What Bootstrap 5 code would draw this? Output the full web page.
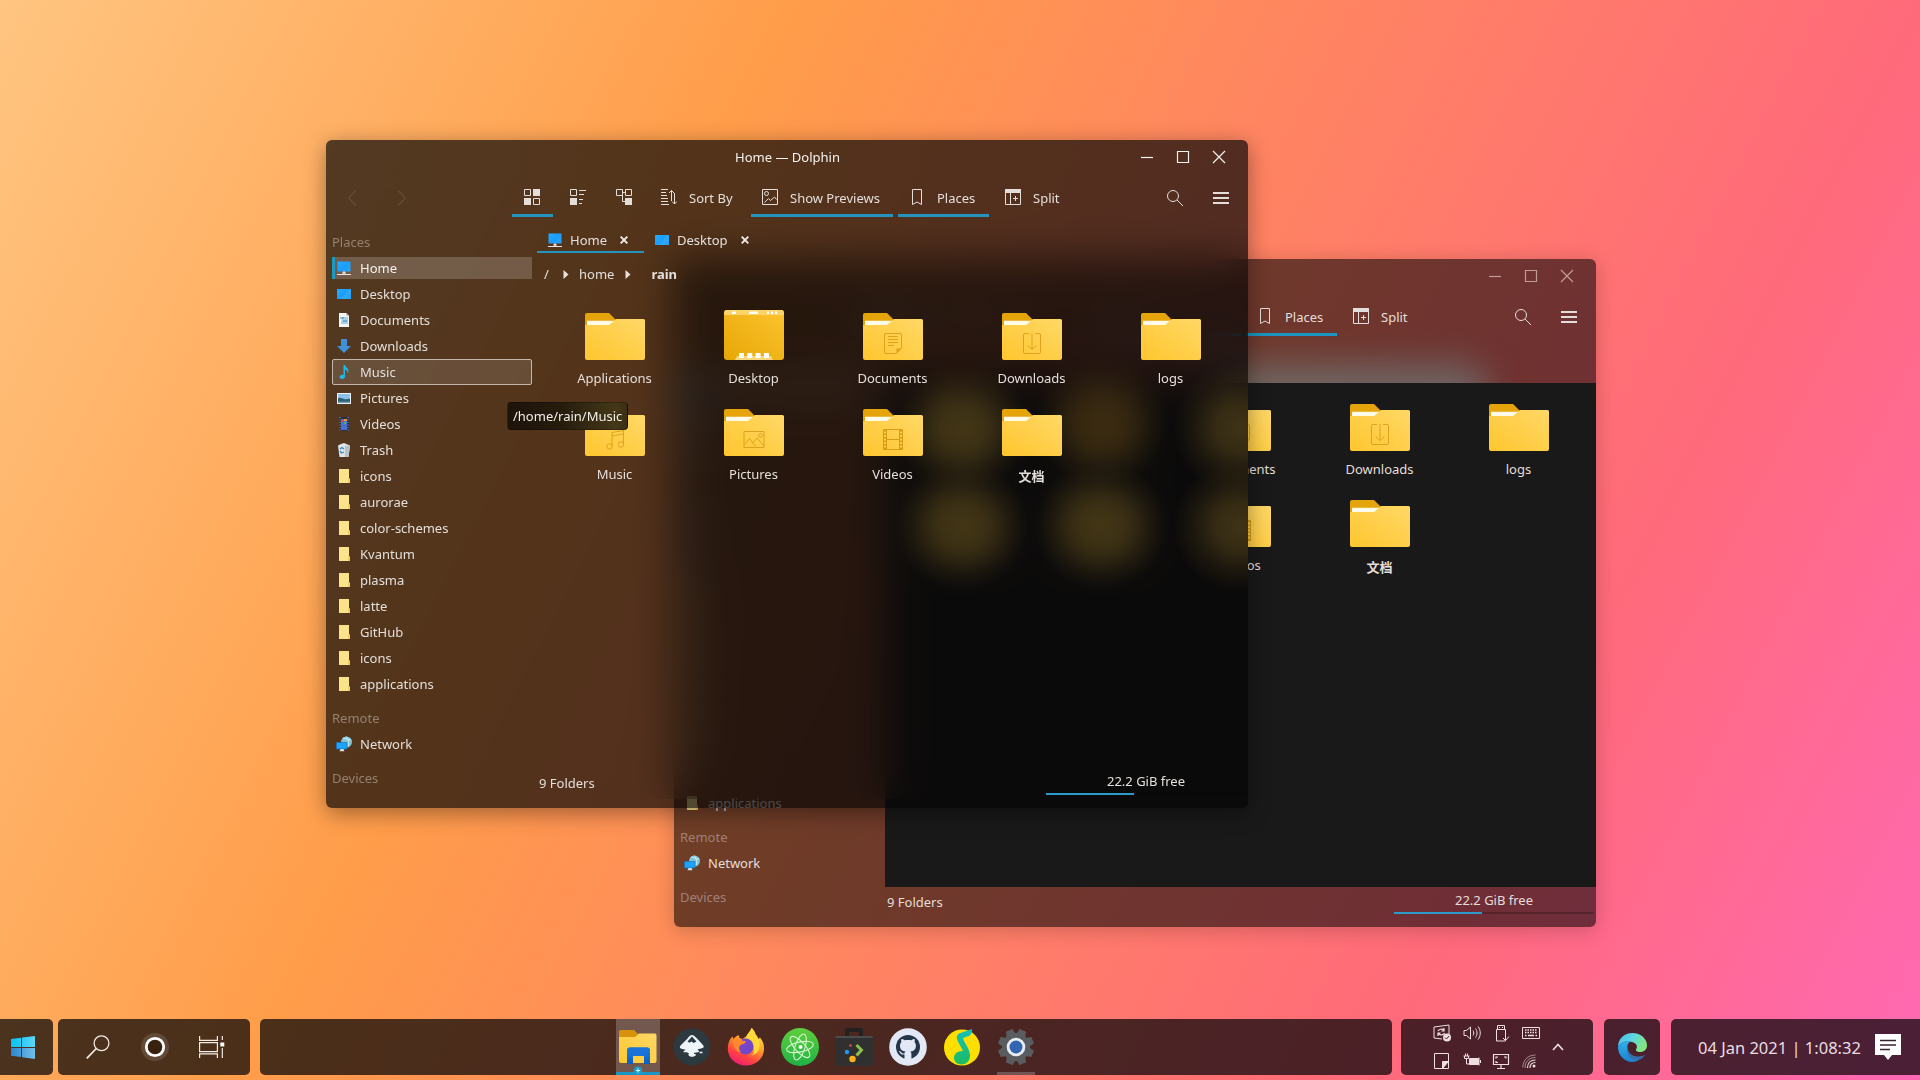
<!DOCTYPE html>
<html lang="en">
<head>
<meta charset="utf-8">
<title>Desktop</title>
<link href="https://cdn.jsdelivr.net/npm/bootstrap@5.3.0/dist/css/bootstrap.min.css" rel="stylesheet">
<style>
html,body{height:100%;overflow:hidden}
body{font-family:"Noto Sans","Noto Sans CJK SC",sans-serif;font-size:13px;line-height:20px;color:#e4deda;
 background:linear-gradient(117deg,#ffc581 0%,#ff9d4a 32%,#ff6a7b 78%,#ff69b4 100%)}
svg{display:block;flex:none}
.desk{width:1920px;height:1080px}
.win{width:922px;height:668px;border-radius:6px;box-shadow:0 5px 22px rgba(0,0,0,.38)}
.win-front{left:326px;top:140px}
.win-back{left:674px;top:259px;box-shadow:0 3px 20px rgba(0,0,0,.2)}
.frost{inset:0 0 9px 0;border-radius:6px 6px 0 0;backdrop-filter:blur(20px)}
.tint{inset:0;border-radius:6px;background:rgba(6,5,5,.69)}
.win-back .frost{display:none}
.win-back .tint{background:rgba(0,0,0,.565)}
.glow{left:500px;top:58px;width:400px;height:66px;overflow:hidden}
.glow:after{content:"";position:absolute;left:30px;top:46px;width:285px;height:80px;background:rgba(110,135,135,.58);filter:blur(17px);border-radius:30px}
.haze{left:560px;top:205px;width:362px;height:250px;
 background:
 radial-gradient(closest-side,rgba(68,55,22,.8) 0%,rgba(66,53,22,.66) 35%,rgba(66,52,22,.25) 70%,rgba(66,52,22,0) 100%) 9px 18px/134px 130px no-repeat,
 radial-gradient(closest-side,rgba(58,41,18,.75) 0%,rgba(56,40,18,.6) 35%,rgba(56,40,18,.22) 70%,rgba(56,40,18,0) 100%) 148px 12px/134px 130px no-repeat,
 radial-gradient(closest-side,rgba(70,57,24,.88) 0%,rgba(67,54,23,.76) 35%,rgba(66,52,22,.3) 70%,rgba(66,52,22,0) 100%) 287px 18px/134px 130px no-repeat,
 radial-gradient(closest-side,rgba(68,55,22,.8) 0%,rgba(66,53,22,.66) 35%,rgba(66,52,22,.25) 70%,rgba(66,52,22,0) 100%) 9px 116px/134px 130px no-repeat,
 radial-gradient(closest-side,rgba(68,55,22,.8) 0%,rgba(66,53,22,.66) 35%,rgba(66,52,22,.25) 70%,rgba(66,52,22,0) 100%) 148px 116px/134px 130px no-repeat,
 radial-gradient(closest-side,rgba(70,57,24,.88) 0%,rgba(67,54,23,.76) 35%,rgba(66,52,22,.3) 70%,rgba(66,52,22,0) 100%) 287px 116px/134px 130px no-repeat}
.titlebar{height:35px}
.wtitle{color:#f6f2ee;left:0;right:0;text-align:center;top:7px;padding-left:1px}
.ctl{gap:20px;padding:0 21px 2px 0;color:#f6f2ee}
.win-back .ctl{color:#c09c98}
.tools{height:42px;padding:4px 0 0 18px}
.nav-arrow{width:50px;color:#6b4d33}
.tbtn{height:38px;padding:1px 0 0 11px;gap:12px;border-bottom:3px solid transparent;margin-right:5px;align-self:flex-end;white-space:nowrap}
.tbtn span{padding-top:1px}
.tbtn.solo{padding-left:12px}
.tbtn.on{border-color:#2493bd}
.win-back .tbtn.on{border-color:#1c95c2}
.side{width:211px;flex:none;padding:4px 5px 0 6px}
.shead{height:34px;padding-top:11px;color:#94806f}
.win-back .shead{color:#a08078}
.srow{height:26px;padding-left:4px;gap:8px}
.srow.sel{height:22px;margin:2px 0;background:rgba(255,255,255,.19);border-left:3px solid #189ac4;padding-left:1px;color:#f6f2ee}
.srow.hov{border:1px solid #c3b7ab;border-radius:2px;background:rgba(255,255,255,.12);padding-left:3px}
.tabs{height:36px;padding-top:4px}
.dtab{height:32px;padding:7px 0 0 10px;gap:7px;border-bottom:2px solid transparent}
.dtab.on{border-color:#2493bd}
.dtab .shut{margin:0 16px 0 auto}
.crumbs{height:38px;padding:4px 0 0 7px}
.files{padding:11px 0 0 8px;flex:1}
.win-back .files{background:#191919;padding-top:10px}
.win-back .pane{padding-top:9px}
.cell{width:139px;height:96px}
.cell svg{margin-top:11px}
.cell svg.tall{margin-top:8px}
.cell span{margin-top:8px}
.cell .cjk{font-family:"Noto Sans CJK SC",sans-serif;font-weight:700;padding-top:2px}
/* third column of the rear window: only its right part sticks out */
.win-back .cell:nth-child(5n+3){clip-path:inset(0 0 0 77px)}
.stat{height:40px}
.meter{width:200px;height:2px;background:rgba(0,0,0,.2);margin-top:2px}
.meter i{display:block;height:2px;background:#2a9bc8}
.tip{left:507px;top:402px;width:121px;height:28px;border-radius:4px;line-height:27px;padding-left:5px;color:#f2eee8;background:linear-gradient(90deg,#1d130a,#261c0d 45%,#443818 90%,#3c3015);border:1px solid rgba(0,0,0,.25)}
.bar{height:56px;bottom:5px;left:0;right:0}
.seg{height:56px;border-radius:5px;background:rgba(3,3,6,.715)}
.seg-start{width:53px;margin-right:5px;padding-left:11px;border-radius:0 5px 5px 0}
.seg-tools{width:192px;margin-right:10px;padding:0 25px 0 28px}
.seg-apps{width:1132px;margin-right:9px;padding-left:351px}
.seg-tray{width:192px;margin-right:11px;color:#efdfe2}
.seg-edge{width:56px;margin-right:11px}
.seg-clock{padding:0 19px 0 27px;border-radius:5px 0 0 5px}
.app{width:54px;height:56px}
.app-on{width:44px;margin:0 5px;background:rgba(255,255,255,.22);border-bottom:3px solid #1996c4}
.app-on svg{margin-top:3px}
.plus{left:18px;bottom:-3px}
.idle:after{content:"";position:absolute;left:8px;right:8px;bottom:0;height:3px;background:rgba(255,255,255,.22)}
.tray{display:grid;grid-template-columns:repeat(4,29.7px);grid-auto-rows:28px;place-items:center;margin-left:26px;width:119px}
.chev{margin-left:6px}
.clock{font-size:16.5px;color:#e9dde2;white-space:nowrap;padding-top:2px}
</style>
<script src="https://cdn.jsdelivr.net/npm/bootstrap@5.3.0/dist/js/bootstrap.bundle.min.js"></script>
</head>
<body>
<svg width="0" height="0" class="position-absolute">
<defs>
<linearGradient id="gF" x1="0" y1="1" x2="1" y2="0"><stop offset="0" stop-color="#ffc62f"/><stop offset="1" stop-color="#ffd866"/></linearGradient>
<linearGradient id="gD" x1="0" y1="1" x2="1" y2="0"><stop offset="0" stop-color="#e7a606"/><stop offset="1" stop-color="#fcc42e"/></linearGradient>
<linearGradient id="gB" x1="0" y1="0" x2="1" y2="1"><stop offset="0" stop-color="#22adff"/><stop offset=".5" stop-color="#1c9dff"/><stop offset="1" stop-color="#28a6f8"/></linearGradient>
<linearGradient id="gFx" x1=".8" y1="0" x2=".3" y2="1"><stop offset="0" stop-color="#fff04a"/><stop offset=".45" stop-color="#ff9a2c"/><stop offset=".75" stop-color="#ff4340"/><stop offset="1" stop-color="#f01a78"/></linearGradient>
<linearGradient id="gEx" x1="0" y1="0" x2="0" y2="1"><stop offset="0" stop-color="#1583e8"/><stop offset="1" stop-color="#0a5fc0"/></linearGradient>
<linearGradient id="gW1" x1="0" y1="0" x2="1" y2="0"><stop offset="0" stop-color="#00c4f6"/><stop offset="1" stop-color="#5fd6f4"/></linearGradient>
<linearGradient id="gW2" x1="0" y1="0" x2="1" y2="0"><stop offset="0" stop-color="#2a86cf"/><stop offset="1" stop-color="#74c0e8"/></linearGradient>
<linearGradient id="gE1" x1="0" y1="0" x2="1" y2=".4"><stop offset="0" stop-color="#4fb8e8"/><stop offset=".5" stop-color="#58d5e6"/><stop offset="1" stop-color="#84e680"/></linearGradient>
<linearGradient id="gE2" x1="0" y1="0" x2="0" y2="1"><stop offset="0" stop-color="#2fb0e8"/><stop offset="1" stop-color="#1a84d2"/></linearGradient>
<linearGradient id="gAt" x1="0" y1="0" x2="0" y2="1"><stop offset="0" stop-color="#5fce3c"/><stop offset="1" stop-color="#1fb244"/></linearGradient>
<linearGradient id="gN" x1="0" y1="0" x2="0" y2="1"><stop offset="0" stop-color="#12c1bd"/><stop offset="1" stop-color="#1cbb62"/></linearGradient>
<symbol id="folder" viewBox="0 0 60 47"><path d="M0 2a2 2 0 0 1 2-2h22l8 8v12H0z" fill="#e5a50a"/><path d="M2 7.700h28l-5 5.500H2z" fill="#fffbe8"/><path d="M0 12h24l7-6h27.500a1.500 1.500 0 0 1 1.500 1.500V45a2 2 0 0 1-2 2H2a2 2 0 0 1-2-2z" fill="url(#gF)"/></symbol>
<symbol id="desktopf" viewBox="0 0 60 50"><rect width="60" height="50" rx="3" fill="url(#gD)"/><path d="M0 5V3a3 3 0 0 1 3-3h54a3 3 0 0 1 3 3v2z" fill="#fbd368"/><path d="M8 2.800h4M25 2.800h9M43 2.800h2M47 2.800h2M51 2.800h2" stroke="#fff" stroke-width="2.400"/><path d="M13 46h34l2 4H11z" fill="#f9d57c"/><path d="M15 43h5v5h-5zM23.300 43h5v5h-5zM31.600 43h5v5h-5zM40 43h5v5h-5z" fill="#fff"/></symbol>
<symbol id="g-Documents" viewBox="0 0 60 47"><path d="M23 20.500h14a1.500 1.500 0 0 1 1.500 1.500v13l-5 5.500H23a1.500 1.500 0 0 1-1.500-1.500V22a1.500 1.500 0 0 1 1.500-1.500zM25 23.500h10M25 26.500h10M25 29.500h10M25 32.500h6" fill="none" stroke="#dfa21a"/><path d="M33.500 40.500V35.500h5z" fill="#dfa21a"/></symbol>
<symbol id="g-Downloads" viewBox="0 0 60 47"><path d="M27 20.500h-4a1.500 1.500 0 0 0-1.500 1.500v17a1.500 1.500 0 0 0 1.500 1.500h14a1.500 1.500 0 0 0 1.500-1.500V22a1.500 1.500 0 0 0-1.500-1.500h-4M30 20v16.500M25.500 32.500l4.500 4 4.500-4" fill="none" stroke="#dfa21a"/></symbol>
<symbol id="g-Music" viewBox="0 0 60 47"><path d="M27 37.500V23.500l11.500-2v14M27 27l11.500-2" fill="none" stroke="#dfa21a"/><circle cx="24.500" cy="37.500" r="2.700" fill="none" stroke="#dfa21a"/><circle cx="36" cy="35.500" r="2.700" fill="none" stroke="#dfa21a"/></symbol>
<symbol id="g-Pictures" viewBox="0 0 60 47"><path d="M20 22.500h20v16H20zM20.500 35.500l5-6 6 8M29 33.500l4-4.500 7 8" fill="none" stroke="#dfa21a"/><circle cx="36.500" cy="26.500" r="1.800" fill="none" stroke="#dfa21a"/></symbol>
<symbol id="g-Videos" viewBox="0 0 60 47"><path d="M20.500 20.500h19v20h-19zM23.500 20.500v20M36.500 20.500v20M23.500 30.500h13" fill="none" stroke="#d99c14"/><path d="M21.700 21v19M38.200 21v19" stroke="#d99c14" stroke-width="2.600" stroke-dasharray="1.500 2"/></symbol>
<symbol id="p-home" viewBox="0 0 16 16"><path d="M1.500 1.500h13v10h-13z" fill="url(#gB)"/><path d="M7 11.500h2v2H7zM1 14h14v1H1z" fill="#e9e4df"/><path d="M6 13h4" stroke="#e9e4df"/></symbol>
<symbol id="p-desk" viewBox="0 0 16 16"><path d="M1 3h14v10H1z" fill="url(#gB)"/><path d="M5 13 13 3h2v4l-5 6z" fill="#38acf2" opacity=".6"/></symbol>
<symbol id="p-doc" viewBox="0 0 16 16"><path d="M3 1h7l3 3v11H3z" fill="#f4f4f2"/><path d="M10 1v3h3z" fill="#c8d2da"/><path d="M6 5h6v7H5z" fill="#a9cfe6"/><path d="M4 6h4M7 9h4" stroke="#3b87b8"/></symbol>
<symbol id="p-down" viewBox="0 0 16 16"><path d="M5 1h6v7h4l-7 7-7-7h4z" fill="#3f8fdb"/></symbol>
<symbol id="p-music" viewBox="0 0 16 16"><path d="M7.500 1h1.500c.4 2.500 3.500 3 3.500 6 0 1-.3 1.500-.8 2.300C11.500 6.500 10.500 6 9 5.500V12.500c0 1.600-1.400 2.500-2.800 2.500S3.500 14.200 3.500 13c0-1.500 2-2.600 4-2z" fill="#22b8e6"/></symbol>
<symbol id="p-pic" viewBox="0 0 16 16"><path d="M1 3h14v11H1z" fill="#e9f2f8"/><path d="M2 4h12v5H2z" fill="#8fc0ea"/><path d="M2 8.500c2-1.500 4 0 6 .5s4-.5 6 0V13H2z" fill="#2d5f78"/><path d="M2 11.500h12V13H2z" fill="#6e97a8"/></symbol>
<symbol id="p-vid" viewBox="0 0 16 16"><path d="M3 1h10v14H3z" fill="#2a2d3c"/><path d="M5 3h6v5H5z" fill="#3b78d8"/><path d="M5 8h6v6H5z" fill="#4a6fd0"/><path d="M8 3h3v2H8z" fill="#e29a2c"/><path d="M5 4h2v2H5z" fill="#d0466a"/><path d="M8 6h2v2H8z" fill="#6a5"/><path d="M4 1v14M12 1v14" stroke="#8aa2c8" stroke-dasharray="1 1.500"/></symbol>
<symbol id="p-trash" viewBox="0 0 16 16"><path d="M2 3.500 5 2l3-1 3 1.200 3 1.300L12.500 15h-9z" fill="#dfe5e8"/><path d="M9 4l5-.5L12.500 15H9z" fill="#b9c2c6"/><path d="M4 7l2-1.500L8 7M4 9l1.500 2L8 10" stroke="#2b8bd6" fill="none" stroke-width="1.300"/></symbol>
<symbol id="p-fold" viewBox="0 0 16 16"><path d="M3 1h10v9l1 1v4H3z" fill="#fbe38c"/><path d="M12 10l2 1v4h-2z" fill="#f3cf62"/></symbol>
<symbol id="p-net" viewBox="0 0 16 16"><circle cx="10.500" cy="6" r="5.500" fill="#7fc4dc"/><path d="M7 2c3 0 4 2 8 2M10 .5c3 3 3 7 2 10" stroke="#d2eef2" fill="none"/><path d="M.5 6.500h10.500v6.500H.5z" fill="#1ea4fb" stroke="#1673ba" stroke-width=".7"/><path d="M4.500 13h3l1 2.300h-5z" fill="#cfe4ea"/></symbol>
<symbol id="t-icons" viewBox="0 0 16 16"><path d="M.5.500h6v6h-6zM9.500 9.500h6v6h-6z" fill="none" stroke="currentColor"/><path d="M9 0h7v7H9zM0 9h7v7H0z" fill="currentColor"/></symbol>
<symbol id="t-list" viewBox="0 0 16 16"><path d="M.5.500h6v6h-6zM9 1.500h7M9 5.500h5M9 10.500h4M9 14.500h3" fill="none" stroke="currentColor"/><path d="M0 9h7v7H0z" fill="currentColor"/></symbol>
<symbol id="t-tree" viewBox="0 0 16 16"><path d="M.5.500h6v6h-6zM9.500.500h6v6h-6zM6.500 3.500v9H9M6.500 3.500h3" fill="none" stroke="currentColor"/><path d="M9 9h7v7H9z" fill="currentColor"/></symbol>
<symbol id="t-sort" viewBox="0 0 16 16"><path d="M0 .5h7M0 3.500h5M0 6.500h6M0 9.500h7M0 12.500h7M0 15.500h8M10.500 12V1.500M8 4l2.500-2.500L13 4M13.500 4v11M11 12.500l2.500 2.500 2.500-2.500" fill="none" stroke="currentColor"/></symbol>
<symbol id="t-prev" viewBox="0 0 16 16"><path d="M.5.500h15v15H.5zM2.500 13.500l4-4 2 2 4-3.500 2 2.500" fill="none" stroke="currentColor"/><circle cx="4.500" cy="4.500" r="2" fill="none" stroke="currentColor"/></symbol>
<symbol id="t-book" viewBox="0 0 16 16"><path d="M3.500.5h9v15l-4.500-2.500-4.500 2.500z" fill="none" stroke="currentColor"/></symbol>
<symbol id="t-split" viewBox="0 0 16 16"><path d="M.5.500h15v15H.5zM5.500 4v11M8 9.500h5M10.500 7v5" fill="none" stroke="currentColor"/><path d="M0 0h16v4H0z" fill="currentColor"/></symbol>
<symbol id="t-find" viewBox="0 0 16 16"><circle cx="6" cy="6" r="5.500" fill="none" stroke="currentColor"/><path d="M10 10l6 6" stroke="currentColor"/></symbol>
<symbol id="t-menu" viewBox="0 0 16 16"><path d="M0 3h16M0 8h16M0 13h16" stroke="currentColor" stroke-width="2"/></symbol>
</defs>
</svg>

<div class="desk position-relative overflow-hidden">
  <section class="win win-back position-absolute" data-back="1"></section>
  <section class="win win-front position-absolute"></section>
  <div class="tip position-absolute">/home/rain/Music</div>

  <footer class="bar position-absolute d-flex">
    <div class="seg seg-start d-flex align-items-center">
      <svg width="24" height="23" viewBox="0 0 24 23"><path d="M0 3 10 1.700V11H0zM11 1.500 24 0v11H11z" fill="url(#gW1)"/><path d="M0 12h10v9L0 19.800zM11 12h13v11l-13-1.700z" fill="url(#gW2)"/></svg>
    </div>
    <div class="seg seg-tools d-flex align-items-center justify-content-between">
      <svg width="24" height="24" viewBox="0 0 24 24" fill="none" stroke="#f3ece6" stroke-width="1.300"><circle cx="15.500" cy="8.200" r="7.400"/><path d="M10.300 13.500.8 23.300" stroke-width="1.700"/></svg>
      <svg width="30" height="30" viewBox="0 0 30 30"><circle cx="15" cy="15" r="14" fill="#fff" opacity=".12"/><circle cx="15" cy="15" r="8.700" fill="#38220f" stroke="#fff" stroke-width="2.800"/></svg>
      <svg width="26" height="22" viewBox="0 0 26 22" fill="none" stroke="#f3ece6" stroke-width="1.200"><path d="M.6 0v4.400h17.800V0M.6 6.600h17.800v9H.6zM.6 22v-4.200h17.800V22M23.300 0v4M23.300 12v10"/><path d="M21.300 6.500h4v4h-4z" fill="#fff" stroke="none"/></svg>
    </div>
    <div class="seg seg-apps d-flex">
      <div class="app app-on position-relative d-flex justify-content-center">
        <svg width="40" height="44" viewBox="0 0 40 44"><path d="M1 10a2 2 0 0 1 2-2h13l4 4v8H1z" fill="#d7920b"/><path d="M1 15h16l4-3.500h16a1.500 1.500 0 0 1 1.500 1.500V39a2 2 0 0 1-2 2H3a2 2 0 0 1-2-2z" fill="url(#gF)"/><path d="M9 42V28.500a3 3 0 0 1 3-3h17a3 3 0 0 1 3 3V42h-6v-8H15v8z" fill="url(#gEx)"/><path d="M9 28.500a3 3 0 0 1 3-3h17a3 3 0 0 1 3 3L26 34H15z" fill="#1a73d8"/></svg>
        <svg class="plus position-absolute" width="8" height="9" viewBox="0 0 8 9"><circle cx="4" cy="4.500" r="4" fill="#1b9fcd"/><path d="M2 4.500h4M4 2.500v4" stroke="#e3f5fb"/></svg>
      </div>
      <div class="app d-flex align-items-center justify-content-center"><svg width="38" height="38" viewBox="0 0 38 38"><circle cx="19" cy="19" r="18.500" fill="#2c3a40"/><path d="M19 7c1.500 0 3 1.500 4.500 3l6 6.500c1.500 1.700 2 3-.5 3.700l-4 1c-1.500.5 2 1.500 1 2.500-1.500 1.200-5 .5-5 1.700 0 .8 2.500.6 2 1.600-.7 1.200-2.500 1.800-4 1.800s-3-.8-3.500-1.600c-.5-1 1-1.500 0-2.200-1.500-.8-4.500 0-5-1.200-.4-1 3-1.300 1.500-2.200-1.400-.7-6-.5-5-3.200.3-.8 1-1.500 2-2.500l6-6C16 8.500 17.500 7 19 7z" fill="#eef5f8"/><path d="M19 8.500 14.500 13.500l2 1.200 2-1.300 2 1.500 3-1.400z" fill="#2c3a40"/><path d="M26.500 24.500h3" stroke="#eef5f8" stroke-width="1.500"/></svg></div>
      <div class="app d-flex align-items-center justify-content-center"><svg width="38" height="38" viewBox="0 0 38 38"><path d="M24.500 0c1.500 1 3.500 4 4 6.500 1.500 1.300 2 3 2.500 5l2-2c3 3.500 4 7 4 11C37 30.500 29 37.500 19 37.500S.8 30.500.8 20.500c0-4.500 1.200-8 3.700-11l1-1 1 2.500C8 9 9.500 8 11.500 7l1 3 3 1C18 9 19 8.500 19.500 8 21 5.500 23.500 3 24.500 0z" fill="url(#gFx)"/><path d="M24.500 0c1.500 1 3.500 4 4 6.500 4 4 5 9 3.500 15-1.500 3-4 5-7 6 3-4 3-9-.5-13-4-2-5.500-4-5-6.500C21 5.500 23.500 3 24.500 0z" fill="#ffd93a"/><circle cx="18.500" cy="18.500" r="8" fill="#7646c8"/><path d="M5 11.500c4-2 8-1 10 1 1.500.5 3 .3 4 1-1 2.500-4 2.500-6 4-1.500 2-1 5 1 7-4-.5-7-4-7.500-8z" fill="#ff8a2c"/></svg></div>
      <div class="app d-flex align-items-center justify-content-center"><svg width="38" height="38" viewBox="0 0 38 38"><circle cx="19" cy="19" r="19" fill="url(#gAt)"/><g fill="none" stroke="#d6f3cc" stroke-width="1.100"><ellipse cx="19" cy="19" rx="13.500" ry="5" transform="rotate(-12 19 19)"/><ellipse cx="19" cy="19" rx="13.500" ry="5" transform="rotate(48 19 19)"/><ellipse cx="19" cy="19" rx="13.500" ry="5" transform="rotate(108 19 19)"/></g><circle cx="19.500" cy="19" r="2" fill="#fff"/></svg></div>
      <div class="app d-flex align-items-center justify-content-center"><svg width="38" height="38" viewBox="0 0 38 38"><path d="M10 8V3a3 3 0 0 1 3-3h12a3 3 0 0 1 3 3v5h-4V4H14v4z" fill="#222"/><path d="M0 10a2 2 0 0 1 2-2h34a2 2 0 0 1 2 2v26a2 2 0 0 1-2 2H2a2 2 0 0 1-2-2z" fill="#303030"/><path d="M0 10a2 2 0 0 1 2-2h34a2 2 0 0 1 2 2H0z" fill="#4c4c4c"/><circle cx="15.500" cy="17.500" r="1.300" fill="#e04e4e"/><circle cx="12" cy="24" r="2.200" fill="#2196f3"/><circle cx="17.500" cy="31" r="3.200" fill="#ffb31a"/><path d="M21.500 17l5 5-5 5.500" stroke="#8bc34a" stroke-width="3" fill="none"/></svg></div>
      <div class="app d-flex align-items-center justify-content-center"><svg width="38" height="38" viewBox="0 0 38 38"><circle cx="19" cy="19" r="18.800" fill="#e3e8f6"/><circle cx="19" cy="19" r="12" fill="#24364a"/><path d="M15.500 31v-4.500c-2 .3-3.500 0-4.500-1.800-.5-.9-1-1.200-1.500-1.600 1.300-.3 2.200.4 3 1.400.8 1 1.700 1.100 3 .7.100-.8.500-1.300 1-1.700-3.500-.4-5.500-2-5.500-5.700 0-1.500.4-2.600 1.300-3.500-.3-1-.3-2.200.2-3.300 1.200 0 2.300.6 3.200 1.300 1.900-.5 4.600-.5 6.500 0 .9-.7 2-1.300 3.200-1.300.5 1.100.5 2.300.2 3.300.9.900 1.300 2 1.300 3.500 0 3.700-2 5.300-5.500 5.700.7.600 1 1.400 1 2.500V31z" fill="#e3e8f6"/></svg></div>
      <div class="app d-flex align-items-center justify-content-center"><svg width="38" height="38" viewBox="0 0 38 38"><circle cx="19" cy="19.500" r="18" fill="#ffdf00"/><path d="M29 1c.3 3-1 6-3 7-2.500 1-4.500 1-6 2.500 1.500 5 6.500 9.500 7 16.500.3 5.500-3.500 9.500-8.500 9.500-4.500 0-7.500-3-7.500-6.500 0-4.500 4-7.500 9-7C18 18.500 15 14.500 14 11c-.8-3 .5-5.200 3.500-6z" fill="url(#gN)"/></svg></div>
      <div class="app idle position-relative d-flex align-items-center justify-content-center"><svg width="38" height="38" viewBox="0 0 38 38"><g fill="#5a5d60"><circle cx="19" cy="19" r="14"/><path id="tooth" d="M15.500 1h7l1.500 7h-10zM15.500 37h7l1.500-7h-10z" transform="rotate(22.500 19 19)"/><use href="#tooth" transform="rotate(45 19 19)"/><use href="#tooth" transform="rotate(90 19 19)"/><use href="#tooth" transform="rotate(135 19 19)"/></g><circle cx="19" cy="19" r="9.300" fill="#e9edf0"/><circle cx="19" cy="19" r="6.500" fill="#3465b0"/></svg></div>
    </div>
    <div class="seg seg-tray d-flex">
      <div class="tray">
        <svg width="18" height="18" viewBox="0 0 18 18" fill="none" stroke="currentColor"><path d="M1 3 16 1v9M1 3v11l8 1"/><path d="M5 7c1-2 4-2.500 6-.5M11 4v3H8.500M11.500 9c-1 2.300-4 2.500-6 .5M5 12V9h2.500" stroke-width="1.200"/><circle cx="14" cy="13.500" r="4" fill="currentColor" stroke="none"/><path d="M12 13.500l1.500 1.500 2.500-3" stroke="#4c2029"/></svg>
        <svg width="18" height="18" viewBox="0 0 18 18" fill="none" stroke="currentColor"><path d="M1 6.500h2.500L7.500 3v12l-4-3.500H1z"/><path d="M10 6.500c1 1.500 1 3.500 0 5M12.500 4.500c2 2.500 2 6.500 0 9M15 2.500c3 3.500 3 9.500 0 13"/></svg>
        <svg width="18" height="18" viewBox="0 0 18 18" fill="none" stroke="currentColor"><path d="M5.500 1.500h7v4h-7zM4.500 5.500h9v11.500h-9z"/><path d="M7.500 3v1M10.500 3v1M11 14l2.500 2.500L17 12.500"/></svg>
        <svg width="18" height="18" viewBox="0 0 18 18" fill="none" stroke="currentColor"><path d="M.5 3.500h17v11H.5z"/><path d="M3 6h12M3 8.500h12" stroke-width="1.500" stroke-dasharray="1.500 1"/><path d="M3 11.500h1.500M6 11.500h6M13.500 11.500H15" stroke-width="1.500"/></svg>
        <svg width="18" height="18" viewBox="0 0 18 18" fill="none" stroke="currentColor"><path d="M1.500 1.500h14v15h-14z"/><path d="M9.500 16.500v-7h6z" fill="currentColor"/></svg>
        <svg width="18" height="18" viewBox="0 0 18 18" fill="none" stroke="currentColor"><path d="M1.500 4v2.500h4V4M2.500 1.500V4M4.500 1.500V4M.5 4h6M3.500 6.500V12H6"/><path d="M6.500 6.500h9v6h-9z" fill="currentColor"/><path d="M16 5.500v8M17.500 8v3"/></svg>
        <svg width="18" height="18" viewBox="0 0 18 18" fill="none" stroke="currentColor"><path d="M1.500 2.500h15v10h-15zM5 16.500h8M9 12.500v4M4 6.500V5h2M12 5h2v1.500M4 9v1.500h2" stroke-width="1.200"/></svg>
        <svg width="18" height="18" viewBox="0 0 18 18" fill="none" stroke="currentColor"><circle cx="12" cy="14" r="1.500" fill="currentColor" stroke="none"/><path d="M8 16c0-3.500 2-5.500 5.500-5.500M5.500 16c0-5 3-8 8-8" stroke-width="1.200"/><path d="M3 16C3 9.500 7 5.500 13.500 5.500M.8 15.500C1 8 6 3 13.500 3" opacity=".55"/></svg>
      </div>
      <svg class="chev align-self-center" width="12" height="8" viewBox="0 0 12 8"><path d="M1 7l5-5.500L11 7" fill="none" stroke="currentColor" stroke-width="1.600"/></svg>
    </div>
    <div class="seg seg-edge d-flex align-items-center justify-content-center">
      <svg width="29" height="29" viewBox="0 0 29 29"><path d="M0 14C0 6 6 0 14.500 0 23 0 29 6 29 12.500c0 4-3 6.500-7 6.500-3.500 0-4.500-1.500-4-2.500 2-3 .5-6.500-4-7.500C9 7.500 2 9 0 14z" fill="url(#gE1)"/><path d="M0 14c2-5 8-6.500 13-5.500-3 1-4 4-3.500 7C10 21 15 27 21 26.800 19 28.300 17 29 14.500 29 6 29 0 22 0 14z" fill="url(#gE2)"/><path d="M9.500 13c-.5 7 5.500 11 11 10.500 3 0 5-1 6.500-2-1.500 3-4 5-6.500 5.500C14 28.500 7 22 9.500 13z" fill="#3a6fae"/><path d="M11 14c0-2.500 1.500-4 4-4 3 1 4.500 3.500 2.500 6.500-.5 1 .5 2.500 4 2.500-3 1.500-8 .5-10.500-5z" fill="#4c2029"/></svg>
    </div>
    <div class="seg seg-clock d-flex align-items-center justify-content-between flex-fill">
      <span class="clock">04 Jan 2021 | 1:08:32</span>
      <svg width="26" height="26" viewBox="0 0 26 26"><path d="M0 0h26v21h-9l-4 5-4-5H0z" fill="#fff"/><path d="M5 6.500h16M5 11h16M5 15.500h10" stroke="#3a2433" stroke-width="1.500"/></svg>
    </div>
  </footer>
</div>

<script>
const ico=(id,w=16,h=16)=>`<svg width="${w}" height="${h}"><use href="#${id}"/></svg>`;
const places=[['Home','home'],['Desktop','desk'],['Documents','doc'],['Downloads','down'],['Music','music'],['Pictures','pic'],['Videos','vid'],['Trash','trash'],
 ...['icons','aurorae','color-schemes','Kvantum','plasma','latte','GitHub','icons','applications'].map(n=>[n,'fold'])];
const files=['Applications','Desktop','Documents','Downloads','logs','Music','Pictures','Videos','文档'];
const glyphs=['Documents','Downloads','Music','Pictures','Videos'];
/* labels of the rear window that the front one covers completely */
const covered=['Applications','Desktop','Music','Pictures'];
const row=([n,i],c='')=>`<div class="srow d-flex align-items-center ${c}">${ico('p-'+i)}<span>${n}</span></div>`;
const tb=(i,t,w,on)=>`<div class="tbtn d-flex align-items-center ${on?'on':''} ${t===null?'solo':''}" style="width:${w}px">${ico('t-'+i)}${t?`<span>${t}</span>`:''}</div>`;
const fileIcon=n=>n==='Desktop'?`<svg class="tall" width="60" height="50"><use href="#desktopf"/></svg>`
 :`<svg width="60" height="47"><use href="#folder"/>${glyphs.includes(n)?`<use href="#g-${n}"/>`:''}</svg>`;
const cross='<svg class="shut" width="8" height="8" viewBox="0 0 8 8"><path d="M.7.700l6.600 6.600M7.300.700.7 7.300" stroke="#f1ece7" stroke-width="1.900"/></svg>';
const arrow='<svg width="6" height="9" viewBox="0 0 6 9"><path d="M.5 0 5.500 4.500.5 9z" fill="#e9e2dc"/></svg>';
document.querySelectorAll('.win').forEach(w=>{
 const back=!!w.dataset.back;
 const list=places.map((p,k)=>back?row([k===16?p[0]:'',p[1]],k===0?'sel':(k===15?'invisible':'')):row(p,k===0?'sel':(k===4?'hov':''))).join('');
 w.innerHTML=`<div class="frost position-absolute"></div><div class="tint position-absolute"></div>${back?'<div class="glow position-absolute"></div>':'<div class="haze position-absolute"></div>'}
 <div class="position-relative d-flex flex-column h-100">
  <div class="titlebar d-flex align-items-center justify-content-end position-relative">${back?'':'<div class="wtitle position-absolute">Home — Dolphin</div>'}
   <div class="ctl d-flex align-items-center position-relative">
    <svg width="16" height="14" viewBox="0 0 16 14"><path d="M2 7.500h12" stroke="currentColor" stroke-width="1.200"/></svg>
    <svg width="16" height="14" viewBox="0 0 16 14"><path d="M2.500 1.500h11v11h-11z" fill="none" stroke="currentColor" stroke-width="1.200"/></svg>
    <svg width="16" height="14" viewBox="0 0 16 14"><path d="M2 1l12 12M14 1 2 13" stroke="currentColor" stroke-width="1.200"/></svg></div></div>
  <div class="tools d-flex align-items-center">
   <div class="d-flex" style="width:168px"><div class="nav-arrow"><svg width="16" height="16" viewBox="0 0 16 16"><path d="M12 .5 4.500 8l7.500 7.500" fill="none" stroke="currentColor" stroke-width="1.100"/></svg></div><div class="nav-arrow"><svg width="16" height="16" viewBox="0 0 16 16"><path d="M4 .5 11.500 8 4 15.500" fill="none" stroke="currentColor" stroke-width="1.100"/></svg></div></div>
   ${tb('icons',null,41,1)}${tb('list',null,41)}${tb('tree',null,41)}${tb('sort',back?'':'Sort By',96)}${tb('prev',back?'':'Show Previews',142,1)}${tb('book','Places',91,1)}${tb('split','Split',90)}
   <div class="ms-auto d-flex" style="gap:30px;padding-right:19px">${ico('t-find')}${ico('t-menu')}</div></div>
  <div class="d-flex flex-fill">
   <div class="side"><div class="shead">${back?'':'Places'}</div>${list}
    <div class="shead">Remote</div>${row(['Network','net'])}<div class="shead">Devices</div></div>
   <div class="pane d-flex flex-column flex-fill">
    ${back?'':`<div class="tabs d-flex"><div class="dtab on d-flex align-items-center" style="width:107px">${ico('p-home')}<span>Home</span>${cross}</div>
     <div class="dtab d-flex align-items-center" style="width:121px">${ico('p-desk')}<span>Desktop</span>${cross}</div></div>`}
    <div class="crumbs d-flex align-items-center">${back?'':`<span style="width:19px">/</span>${arrow}<span style="margin:0 11px 0 10px">home</span>${arrow}<b style="margin-left:20px">rain</b>`}</div>
    <div class="files d-flex flex-wrap align-content-start">${files.map(n=>`<div class="cell d-flex flex-column align-items-center">${fileIcon(n)}<span class="${n==='文档'?'cjk':''}">${back&&covered.includes(n)?'':n}</span></div>`).join('')}</div>
    <div class="stat d-flex justify-content-between"><span style="padding:5px 0 0 2px">9 Folders</span>
     <div style="width:202px"><div class="text-center" style="padding:3px 2px 0 0">22.2 GiB free</div><div class="meter"><i style="width:44%"></i></div></div></div>
   </div></div></div>`;
});
</script>
</body>
</html>
